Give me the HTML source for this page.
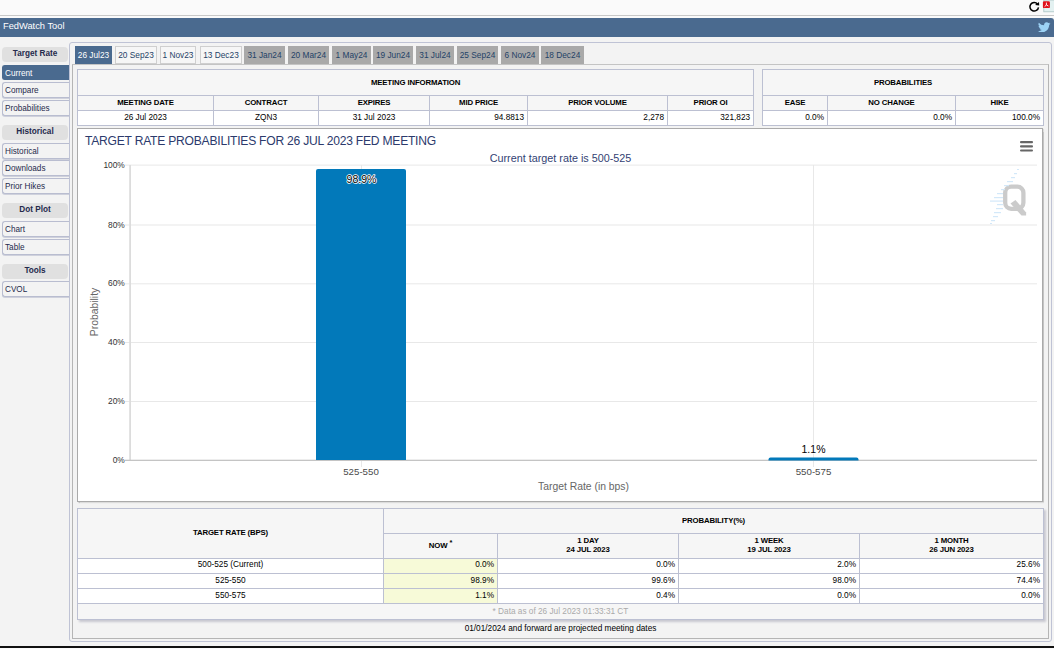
<!DOCTYPE html>
<html><head><meta charset="utf-8">
<style>
*{box-sizing:border-box;margin:0;padding:0}
html,body{width:1054px;height:649px;overflow:hidden}
body{background:#f3f3f3;font-family:"Liberation Sans",sans-serif;position:relative;color:#000}
.a{position:absolute}
#top{left:0;top:0;width:1054px;height:18px;background:#fafafa}
#topline{left:0;top:15px;width:1054px;height:1px;background:#c8c8c8}
#hdr{left:0;top:18px;width:1054px;height:19px;background:#4a6a8f;border-top-right-radius:3px}
#hdr span{position:absolute;left:3px;top:2px;color:#fff;font-size:9.3px;line-height:12px}
.sh{left:2px;width:66px;height:14.5px;background:#e0e0e0;border-radius:4px;font-weight:bold;font-size:8.2px;color:#252a4c;text-align:center;line-height:14px}
.si{left:2px;width:68px;height:16px;border:1px solid #b9bdd0;border-right:none;border-radius:3px 0 0 3px;box-shadow:0 1px 0 #cfd1dc;font-size:8.2px;color:#252a4c;padding-left:2px;line-height:15px;background:#f3f3f3}
.si.on{background:#4a6a8f;color:#fff;border-color:#4a6a8f;box-shadow:none}
#panel{left:69px;top:42px;width:983px;height:600px;border:1px solid #bfc3d5;border-radius:3px}
#inner{left:72px;top:64px;width:977px;height:575px;border:1px solid #b5b5b5;border-top-color:#c4c4c4}
.tab{top:46px;height:18px;font-size:8.3px;line-height:16px;text-align:center;color:#1f4266;border:1px solid #cfcfcf;background:#f6f6f6}
.tab.g{background:#a9a9a9;border-color:#a9a9a9}
.tab.on{background:#4a6a8f;color:#fff;border-color:#4a6a8f}
table{border-collapse:collapse;position:absolute;table-layout:fixed}
td,th{border:1px solid #bcc0d2;padding:0 3px 0;overflow:hidden;white-space:nowrap}
th{font-weight:bold;font-size:7.8px;letter-spacing:-0.15px;background:#f6f6f6;text-align:center}
td{font-size:8.25px;background:#fff;text-align:right}
td.c{text-align:center}
th{padding-bottom:2px}
.mi th.h1{padding-bottom:0}
.mi td{padding-bottom:1px}
.bt td{padding-bottom:4px}
.bt td.ft{padding-bottom:0}
.bt tr.r2 td{padding-bottom:2px}
sup{font-size:7.5px;line-height:0;vertical-align:baseline;position:relative;top:-2.5px}
#chart{left:77px;top:128px;width:966px;height:374px;background:#fff;border:1px solid #aaaaaa;box-shadow:0.5px 1px 1px #c4c4c4}
.yl{position:absolute;right:918px;font-size:8px;color:#444;line-height:10px;text-align:right}
.gl{position:absolute;left:53px;width:907px;height:1px;background:#e8e8e8}
</style></head><body>
<div class="a" id="top"></div>
<div class="a" id="topline"></div>
<div class="a" id="hdr"><span>FedWatch Tool</span></div>
<svg class="a" style="left:1020px;top:0" width="34" height="16" viewBox="1020 0 34 16">
<path d="M1037.5 3.9A4.3 4.3 0 1 0 1038.5 7.3" fill="none" stroke="#000" stroke-width="1.5"/>
<path d="M1035 5L1039 1.9L1039.2 5.6Z" fill="#000"/>
<rect x="1043.8" y="0" width="11" height="11.8" fill="#e3f1f1" stroke="#aac4c4" stroke-width="0.8"/>
<rect x="1042.9" y="1.3" width="7" height="6.8" rx="1.2" fill="#e0101a"/>
<path d="M1046.4 2.6v2.4M1046.4 5l-1.8 1.6M1046.4 5l2 1" stroke="#fff" stroke-width="0.9" fill="none"/>
</svg>
<svg class="a" style="left:1038px;top:21.5px" width="12.5" height="10.8" viewBox="0 0 24 20">
<path fill="#9dd3f5" d="M24 2.4a9.8 9.8 0 0 1-2.8.8A4.9 4.9 0 0 0 23.3.4a9.9 9.9 0 0 1-3.1 1.2A4.9 4.9 0 0 0 11.8 6 14 14 0 0 1 1.7.9a4.9 4.9 0 0 0 1.5 6.6A4.9 4.9 0 0 1 1 6.9a4.9 4.9 0 0 0 3.9 4.8 4.9 4.9 0 0 1-2.2.1 4.9 4.9 0 0 0 4.6 3.4A9.9 9.9 0 0 1 0 17.3 14 14 0 0 0 7.5 19.5c9.1 0 14-7.5 14-14v-.6A10 10 0 0 0 24 2.4z"/>
</svg>

<!-- sidebar -->
<div class="a sh" style="top:47px">Target Rate</div>
<div class="a si on" style="top:65px;height:15px">Current</div>
<div class="a si" style="top:82px">Compare</div>
<div class="a si" style="top:100px">Probabilities</div>
<div class="a sh" style="top:125px">Historical</div>
<div class="a si" style="top:143px">Historical</div>
<div class="a si" style="top:160px">Downloads</div>
<div class="a si" style="top:178px">Prior Hikes</div>
<div class="a sh" style="top:203px">Dot Plot</div>
<div class="a si" style="top:221px">Chart</div>
<div class="a si" style="top:239px">Table</div>
<div class="a sh" style="top:264px">Tools</div>
<div class="a si" style="top:281px">CVOL</div>

<div class="a" id="panel"></div>
<div class="a" id="inner"></div>

<!-- tabs -->
<div class="a tab on" style="left:75px;width:37px">26 Jul23</div>
<div class="a tab" style="left:115px;width:42px">20 Sep23</div>
<div class="a tab" style="left:160px;width:36px">1 Nov23</div>
<div class="a tab" style="left:200px;width:42px">13 Dec23</div>
<div class="a tab g" style="left:244px;width:41px">31 Jan24</div>
<div class="a tab g" style="left:288px;width:41px">20 Mar24</div>
<div class="a tab g" style="left:332px;width:39px">1 May24</div>
<div class="a tab g" style="left:373px;width:40px">19 Jun24</div>
<div class="a tab g" style="left:416px;width:38px">31 Jul24</div>
<div class="a tab g" style="left:457px;width:41px">25 Sep24</div>
<div class="a tab g" style="left:501px;width:38px">6 Nov24</div>
<div class="a tab g" style="left:541px;width:43px">18 Dec24</div>

<!-- meeting info table -->
<table class="mi" style="left:77px;top:69px;width:676px">
<colgroup><col style="width:136px"><col style="width:105px"><col style="width:111px"><col style="width:98px"><col style="width:140px"><col style="width:86px"></colgroup>
<tr style="height:26px"><th colspan="6" class="h1">MEETING INFORMATION</th></tr>
<tr style="height:15px"><th>MEETING DATE</th><th>CONTRACT</th><th>EXPIRES</th><th>MID PRICE</th><th>PRIOR VOLUME</th><th>PRIOR OI</th></tr>
<tr style="height:15px"><td class="c">26 Jul 2023</td><td class="c">ZQN3</td><td class="c">31 Jul 2023</td><td>94.8813</td><td>2,278</td><td>321,823</td></tr>
</table>
<table class="mi" style="left:762px;top:69px;width:281px">
<colgroup><col style="width:65px"><col style="width:128px"><col style="width:88px"></colgroup>
<tr style="height:26px"><th colspan="3" class="h1">PROBABILITIES</th></tr>
<tr style="height:15px"><th>EASE</th><th>NO CHANGE</th><th>HIKE</th></tr>
<tr style="height:15px"><td>0.0%</td><td>0.0%</td><td>100.0%</td></tr>
</table>

<!-- chart -->
<div class="a" id="chart"></div>
<svg class="a" style="left:0;top:0" width="1054" height="649" viewBox="0 0 1054 649" font-family="Liberation Sans, sans-serif">
<g fill="#e8e8e8">
<rect x="125" y="164.6" width="912" height="1"/>
<rect x="125" y="224.5" width="912" height="1"/>
<rect x="125" y="283.3" width="912" height="1"/>
<rect x="125" y="342" width="912" height="1"/>
<rect x="125" y="401" width="912" height="1"/>
<rect x="361" y="165" width="1" height="302"/>
<rect x="813" y="165" width="1" height="302"/>
</g>
<rect x="129.2" y="165" width="1.8" height="295" fill="#dcdcdc"/>
<rect x="125" y="459.7" width="912" height="1.3" fill="#c4c4c4"/>
<path d="M316 460V171a2 2 0 0 1 2-2H404a2 2 0 0 1 2 2V460Z" fill="#0279ba"/>
<path d="M768.5 460.5V459.5a2 2 0 0 1 2-2H856.5a2 2 0 0 1 2 2V460.5Z" fill="#0279ba"/>
<g font-size="8.4" fill="#333" text-anchor="end">
<text x="124.8" y="168.2">100%</text>
<text x="124.8" y="227.7">80%</text>
<text x="124.8" y="286.2">60%</text>
<text x="124.8" y="345.3">40%</text>
<text x="124.8" y="404.1">20%</text>
<text x="124.8" y="463">0%</text>
</g>
<text x="0" y="0" transform="translate(97.5 312) rotate(-90)" text-anchor="middle" font-size="10.4" fill="#666">Probability</text>
<g font-size="9.7" fill="#4a4a4a" text-anchor="middle">
<text x="361" y="475">525-550</text>
<text x="813.5" y="475">550-575</text>
</g>
<text x="583.5" y="490" font-size="10.36" fill="#666" text-anchor="middle">Target Rate (in bps)</text>
<text x="85" y="145" font-size="12.1" letter-spacing="-0.23" fill="#2c3a6c">TARGET RATE PROBABILITIES FOR 26 JUL 2023 FED MEETING</text>
<text x="560.5" y="161.7" font-size="10.8" fill="#333f73" text-anchor="middle">Current target rate is 500-525</text>
<g font-size="10.5" text-anchor="middle" fill="#000" stroke="#fff" stroke-width="1.5" paint-order="stroke" stroke-linejoin="round">
<text x="361.5" y="183">98.9%</text>
<text x="813.5" y="453.2">1.1%</text>
</g>
<g>
<path d="M1011.2 186.7h6.2a6 6 0 0 1 6 6v10.1a6 6 0 0 1-6 6h-6.2a6 6 0 0 1-6-6v-10.1a6 6 0 0 1 6-6z" fill="none" stroke="#cbcbcb" stroke-width="4.3"/>
<path d="M1010.5 203.5l5-3.5l10.6 12.6v2.9h-4.6z" fill="#cbcbcb"/>
</g>
<g fill="#d3e8f9">
<rect x="1017" y="169" width="2" height="1"/>
<rect x="1014" y="173" width="3" height="1.2"/>
<rect x="1011" y="177" width="4" height="1.2"/>
<rect x="1007" y="181" width="6" height="1.2"/>
<rect x="1004" y="185" width="5" height="1.2"/>
<rect x="1001" y="189" width="4" height="1.2"/>
<rect x="997" y="193" width="6" height="1.2"/>
<rect x="994" y="197" width="9" height="1.2"/>
<rect x="990" y="200.5" width="13" height="1.2"/>
<rect x="997" y="204" width="6" height="1.2"/>
<rect x="996" y="208" width="7" height="1.2"/>
<rect x="994" y="212" width="7" height="1.2"/>
<rect x="993" y="216" width="5" height="1.2"/>
<rect x="991" y="220" width="4" height="1.2"/>
<rect x="990" y="223" width="2" height="1"/>
</g>
<g fill="#666"><rect x="1020" y="141" width="13" height="2.2" rx="1"/><rect x="1020" y="145.2" width="13" height="2.2" rx="1"/><rect x="1020" y="149.4" width="13" height="2.2" rx="1"/></g>
</svg>

<!-- bottom table -->
<table class="bt" style="left:77px;top:508px;width:966px;box-shadow:2px 2px 2px #c8c8d0">
<colgroup><col style="width:306px"><col style="width:114px"><col style="width:181px"><col style="width:181px"><col style="width:184px"></colgroup>
<tr style="height:25px"><th rowspan="2">TARGET RATE (BPS)</th><th colspan="4">PROBABILITY(%)</th></tr>
<tr style="height:25px"><th>NOW <sup>*</sup></th><th>1 DAY<br>24 JUL 2023</th><th>1 WEEK<br>19 JUL 2023</th><th>1 MONTH<br>26 JUN 2023</th></tr>
<tr style="height:15px"><td class="c">500-525 (Current)</td><td style="background:#f7fad8">0.0%</td><td>0.0%</td><td>2.0%</td><td>25.6%</td></tr>
<tr style="height:15px" class="r2"><td class="c">525-550</td><td style="background:#f7fad8">98.9%</td><td>99.6%</td><td>98.0%</td><td>74.4%</td></tr>
<tr style="height:15px" class="r2"><td class="c">550-575</td><td style="background:#f7fad8">1.1%</td><td>0.4%</td><td>0.0%</td><td>0.0%</td></tr>
<tr style="height:16px"><td colspan="5" class="c ft" style="background:#f6f6f6;color:#aaa">* Data as of 26 Jul 2023 01:33:31 CT</td></tr>
</table>
<div class="a" style="left:72px;top:623px;width:977px;text-align:center;font-size:8.25px;line-height:12px">01/01/2024 and forward are projected meeting dates</div>
<div class="a" style="left:0;top:646px;width:1054px;height:2px;background:#111"></div>
<div class="a" style="left:0;top:648px;width:1054px;height:1px;background:#fafafa"></div>
</body></html>
